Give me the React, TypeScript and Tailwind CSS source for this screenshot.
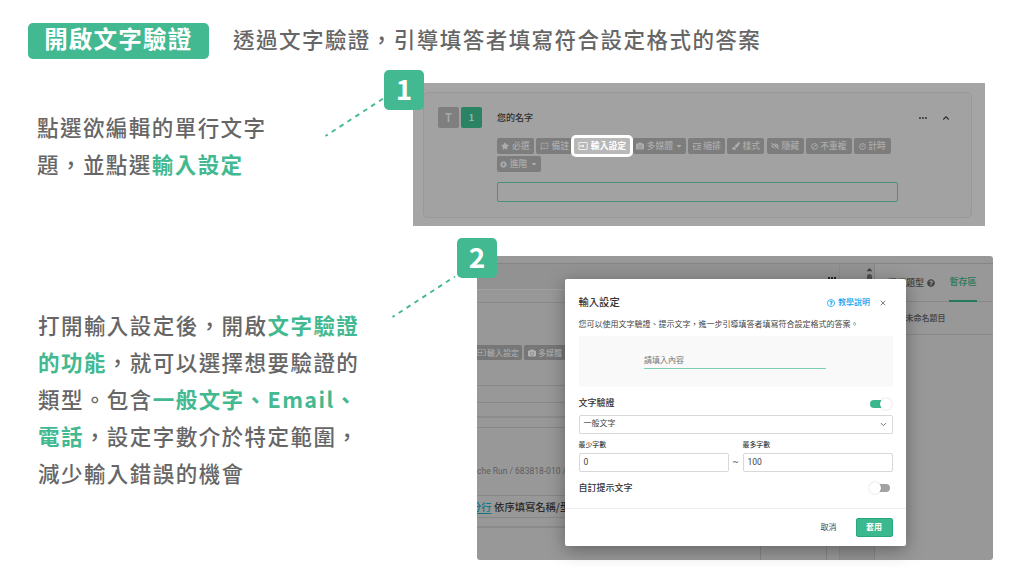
import React from 'react';
import { FaStar, FaCamera, FaCaretDown, FaCaretUp, FaPaintBrush, FaEyeSlash, FaQuestionCircle, FaRegQuestionCircle } from 'react-icons/fa';
import { MdInput, MdOutlineSms } from 'react-icons/md';
import { ChevronDown, ChevronUp, X } from 'lucide-react';

const Green = ({ children }: { children: React.ReactNode }) => (
  <span className="font-bold text-[#42b990]">{children}</span>
);

const StepBadge = ({ label }: { label: string }) => (
  <div className="flex h-10 w-10 items-center justify-center rounded-[5px] bg-[#42b990] pb-[5px] text-[28px] leading-none font-bold text-white">
    {label}
  </div>
);

const IndentIcon = () => (
  <svg className="h-[7px] w-[8px]" viewBox="0 0 8 7" fill="none" stroke="currentColor">
    <path d="M0 .6h8M0 6.2h8M4.2 2.5H8M4.2 4.3H8" strokeWidth="1" />
    <path d="M0 1.8 3 3.4 0 5z" fill="currentColor" stroke="none" />
  </svg>
);

const BanIcon = () => (
  <svg className="h-[7px] w-[7px]" viewBox="0 0 7 7" fill="none" stroke="currentColor">
    <circle cx="3.5" cy="3.5" r="2.9" strokeWidth="1" />
    <path d="M2 5 5 2" strokeWidth="1" />
  </svg>
);

const ClockIcon = () => (
  <svg className="h-[7px] w-[7px]" viewBox="0 0 7 7" fill="none" stroke="currentColor">
    <circle cx="3.5" cy="3.5" r="2.9" strokeWidth="1" />
    <path d="M3.8 1.6v2H2.2" strokeWidth=".8" />
  </svg>
);

const GearIcon = () => (
  <svg className="h-[7px] w-[7px]" viewBox="0 0 7 7" fill="none" stroke="currentColor">
    <circle cx="3.5" cy="3.5" r="2" strokeWidth="1.6" />
    <circle cx="3.5" cy="3.5" r="3" strokeWidth="1" strokeDasharray="1.2 1.156" />
  </svg>
);

const toolbar = [
  { label: '必選', icon: <FaStar />, width: 'w-[37px]' },
  { label: '備註', icon: <MdOutlineSms className="text-[9px]" />, width: 'w-[37px]' },
  { label: '輸入設定', icon: <MdInput className="text-[10px]" />, width: 'w-[56px]', active: true },
  { label: '多媒體', icon: <FaCamera />, width: 'w-[53px]', menu: true },
  { label: '縮排', icon: <IndentIcon />, width: 'w-[37px]' },
  { label: '樣式', icon: <FaPaintBrush />, width: 'w-[37px]' },
  { label: '隱藏', icon: <FaEyeSlash />, width: 'w-[37px]' },
  { label: '不重複', icon: <BanIcon />, width: 'w-[46px]' },
  { label: '計時', icon: <ClockIcon />, width: 'w-[37px]' },
  { label: '進階', icon: <GearIcon />, width: 'w-[44px]', menu: true },
];

const QuestionCard = () => (
  <div className="h-[143px] w-[572px] bg-[#a5a5a5] pt-[9px] pl-[10px]">
    <div className="h-[126px] w-[549px] rounded-[5px] border border-[#999999] bg-[#a2a2a2] pt-[14px] pl-[14px]">
      <div className="flex h-[21px] items-center">
        <div className="flex h-[21px] w-[21px] items-center justify-center rounded-[2px] bg-[#7f7f7f] pb-[1px] text-[11px] font-bold text-[#a8a8a8]">T</div>
        <div className="ml-[2px] flex h-[21px] w-[21px] items-center justify-center rounded-[2px] bg-[#2a8463] text-[9px] font-bold text-[#9cb5aa]">1</div>
        <span className="ml-[15px] text-[9px] font-medium text-[#2d2d2d]">您的名字</span>
        <div className="ml-auto flex items-center pr-[20px] text-[#333333]">
          <span className="flex gap-[1px]">
            <i className="h-[2px] w-[2px] rounded-full bg-[#333333]" />
            <i className="h-[2px] w-[2px] rounded-full bg-[#333333]" />
            <i className="h-[2px] w-[2px] rounded-full bg-[#333333]" />
          </span>
          <ChevronUp className="ml-[14px] h-[10px] w-[10px]" strokeWidth={2.6} />
        </div>
      </div>
      <div className="mt-[10px] ml-[59px] flex w-[400px] flex-wrap gap-x-[2.1px] gap-y-[2px]">
        {toolbar.map((item) => (
          <div
            key={item.label}
            className={`${item.width} flex h-4 shrink-0 items-center justify-center gap-[2.5px] rounded-[2px] text-[8.8px] leading-none whitespace-nowrap ${
              item.active
                ? 'z-10 -ml-[1px] mr-[1px] bg-[#b8b8b8] font-bold text-white outline-[3px] outline-white'
                : 'bg-[#7d7d7d] font-medium text-[#acacac]'
            }`}
          >
            <span className="text-[8px]">{item.icon}</span>
            <span>{item.label}</span>
            {item.menu && <FaCaretDown className="text-[8px]" />}
          </div>
        ))}
      </div>
      <div className="mt-[10px] ml-[59px] h-5 w-[401px] rounded-[2px] border border-[#4b9078]" />
    </div>
  </div>
);

const EditorBackdrop = () => (
  <div className="flex h-full flex-col">
    <div className="h-[8px] border-b border-[#858585]" />
    <div className="flex flex-1">
      <div className="flex w-[363px] flex-col border-r border-[#8c8c8c]">
        <div className="flex h-[26px] items-start justify-end gap-[1px] border-b border-[#a1a1a1] bg-[#929292] pt-[13px] pr-[3px]">
          <i className="h-[2px] w-[2px] bg-[#222222]" />
          <i className="h-[2px] w-[2px] bg-[#222222]" />
          <i className="h-[2px] w-[2px] bg-[#222222]" />
        </div>
        <div className="h-[13px] border-b border-[#8a8a8a]" />
        <div className="flex h-[83px] gap-[2px] border-b border-[#888888] pt-[42px] text-[8px] leading-none text-[#b3b3b3]">
          <div className="flex h-[15px] w-[45px] items-center gap-[1px] rounded-r-[2px] bg-[#777777] whitespace-nowrap">
            <MdInput className="shrink-0 text-[9px]" />
            輸入設定
          </div>
          <div className="flex h-[15px] w-[52px] items-center gap-[2px] rounded-[2px] bg-[#777777] pl-[4px]">
            <FaCamera className="text-[8px]" />
            多媒體
          </div>
        </div>
        <div className="h-[17px] border-b border-[#888888]" />
        <div className="h-[15px] border-b-2 border-[#8c8c8c]" />
        <div className="h-[10px] border-b border-[#888888]" />
        <div className="flex h-[68px] items-center border-b border-[#888888] pt-[19px]">
          <span className="font-['Roboto','Noto_Sans_CJK_TC',sans-serif] text-[8.5px] whitespace-nowrap text-[#5e5e5e]">che Run / 683818-010 / 選</span>
        </div>
        <div className="flex h-[22px] w-[300px] items-center overflow-hidden border-b border-[#888888] text-[10.3px] font-medium whitespace-nowrap text-[#2b2b2b]">
          <span className="-ml-[6px] mr-[2.5px] text-[#117787] underline underline-offset-2">分行</span>
          依序填寫名稱/型號
        </div>
        <div className="h-[10px] border-b-2 border-[#8b8b8b]" />
        <div className="ml-[283px] w-[67px] flex-1 border-x border-[#858585]" />
      </div>
      <div className="flex w-[35px] justify-end border-r border-[#868686] bg-[#929292]">
        <div className="flex w-[10px] flex-col items-center pt-[1px] text-[#444444]">
          <FaCaretUp className="text-[9px]" />
          <i className="h-[12px] w-[5px] rounded-full bg-[#505050]" />
        </div>
      </div>
      <div className="flex flex-1 flex-col text-[#444444]">
        <div className="flex h-[38px] items-center border-b border-[#888888] text-[9px] font-medium">
          <span className="ml-[13px] whitespace-nowrap">選擇題型</span>
          <FaQuestionCircle className="ml-[3px] text-[8px]" />
          <span className="ml-auto mr-[16.5px] flex h-[38px] items-center border-b-2 border-[#26795a] pt-[1px] text-[#26795a]">暫存區</span>
        </div>
        <div className="flex h-[33px] items-center border-b border-[#888888] pl-[30.5px] text-[8px] font-medium">未命名題目</div>
      </div>
    </div>
  </div>
);

const InputSettingsDialog = () => (
  <div className="flex h-[267px] w-[341px] flex-col rounded-[2px] bg-white font-['Roboto','Noto_Sans_CJK_TC',sans-serif] text-[#444444] shadow-[0_4px_18px_rgba(0,0,0,0.35)]">
    <div className="flex h-[230px] flex-col border-b border-[#eeeeee] px-[13.5px] pt-[15.5px]">
      <div className="flex h-4 items-center">
        <span className="text-[10.3px] font-medium text-[#333333]">輸入設定</span>
        <span className="ml-auto flex items-center gap-[3px] text-[8px] font-medium text-[#12a5f0]">
          <FaRegQuestionCircle />
          教學說明
        </span>
        <X className="ml-[9px] mr-[5.5px] h-2 w-2" strokeWidth={2} />
      </div>
      <div className="mt-[8px] h-3 text-[8px] leading-[12px] whitespace-nowrap">您可以使用文字驗證、提示文字，進一步引導填答者填寫符合設定格式的答案。</div>
      <div className="mt-[5.5px] h-[51px] bg-[#f9f9f9] pt-[15px] pl-[65.5px]">
        <div className="h-[18px] w-[182px] border-b border-[#7bd0b0] text-[8px] leading-[19px] text-[#777777]">請填入內容</div>
      </div>
      <div className="mt-[11px] flex h-3 items-center justify-between">
        <span className="text-[9px] font-medium text-[#333333]">文字驗證</span>
        <Toggle on />
      </div>
      <div className="mt-[4.5px] flex h-[19px] items-center justify-between rounded-[2px] border border-[#d8d8d8] px-[4px] text-[8px]">
        一般文字
        <ChevronDown className="h-[9px] w-[9px]" />
      </div>
      <div className="mt-[6.4px] flex items-end">
        <NumberField label="最少字數" value="0" />
        <span className="flex h-[19px] flex-1 items-center justify-center text-[9px]">~</span>
        <NumberField label="最多字數" value="100" />
      </div>
      <div className="mt-[10.5px] flex h-3 items-center justify-between">
        <span className="text-[9px] font-medium text-[#333333]">自訂提示文字</span>
        <Toggle />
      </div>
    </div>
    <div className="flex flex-1 items-center justify-end pr-[13.5px] text-[8px]">
      <span>取消</span>
      <div className="ml-[19px] flex h-[19px] w-[37px] items-center justify-center rounded-[2px] border border-[#27a97d] bg-[#3cb88e] font-bold text-white">套用</div>
    </div>
  </div>
);

const NumberField = ({ label, value }: { label: string; value: string }) => (
  <div className="w-[150px]">
    <div className="h-[13px] text-[6.9px] leading-[11px] font-medium">{label}</div>
    <div className="h-[19px] rounded-[2px] border border-[#d8d8d8] pl-[4px] text-[8.5px] leading-[17px]">{value}</div>
  </div>
);

const Toggle = ({ on = false }: { on?: boolean }) => (
  <div className={`flex items-center ${on ? 'mr-[1px]' : 'mr-[3px] flex-row-reverse'}`}>
    <div className={`h-2 w-[14px] rounded-full ${on ? 'bg-[#3cb88e]' : 'bg-[#a2a2a2]'}`} />
    <div className={`z-10 h-3 w-3 rounded-full bg-white shadow-[0_0_1.5px_rgba(0,0,0,0.25)] ${on ? '-ml-1' : '-mr-[5px]'}`} />
  </div>
);

const Connector = () => (
  <svg className="h-[50px] w-[70px]" viewBox="0 0 70 50" fill="none">
    <path d="M4.5 46 L67 5.5" stroke="#42b990" strokeWidth="1.9" strokeDasharray="4.6 4.8" strokeDashoffset="2" />
  </svg>
);

const App = () => {
  return (
    <main className="flex h-[577px] w-[1024px] flex-col overflow-hidden bg-white font-['Noto_Sans_CJK_TC',sans-serif] text-[#666666]">
      <header className="flex h-[83px] items-start pt-[22.5px] pl-[27.5px]">
        <h1 className="flex h-[36px] w-[181.5px] items-center justify-center rounded-[5px] bg-[#42b990] pb-[3px] text-[23.5px] leading-none font-bold tracking-[1.2px] whitespace-nowrap text-white">
          開啟文字驗證
        </h1>
        <p className="ml-[24px] text-[21.5px] leading-[31px] font-medium tracking-[1.47px] whitespace-nowrap">
          透過文字驗證，引導填答者填寫符合設定格式的答案
        </p>
      </header>

      <section className="flex h-[173px]">
        <p className="w-[413px] pt-[25px] pl-[37px] text-[21.5px] leading-[37px] font-medium tracking-[1.45px]">
          點選欲編輯的單行文字
          <br />
          題，並點選<Green>輸入設定</Green>
        </p>
        <div className="relative h-[143px]">
          <QuestionCard />
          <div className="absolute -top-[13px] -left-[29px]">
            <StepBadge label="1" />
          </div>
          <div className="absolute top-[7px] -left-[92px] w-[64px] overflow-hidden">
            <Connector />
          </div>
        </div>
      </section>

      <section className="flex h-[304px]">
        <p className="w-[477px] pt-[50px] pl-[38px] text-[21.5px] leading-[37px] font-medium tracking-[1.45px] whitespace-nowrap">
          打開輸入設定後，開啟<Green>文字驗證</Green>
          <br />
          <Green>的功能</Green>，就可以選擇想要驗證的
          <br />
          類型。包含<Green>一般文字、Email、</Green>
          <br />
          <Green>電話</Green>，設定字數介於特定範圍，
          <br />
          減少輸入錯誤的機會
        </p>
        <div className="relative h-[304px] w-[516px]">
          <div className="h-full overflow-hidden rounded-[3px] bg-[#989898]">
            <EditorBackdrop />
          </div>
          <div className="absolute top-[23px] left-[88px]">
            <InputSettingsDialog />
          </div>
          <div className="absolute -top-[18px] -left-[20px]">
            <StepBadge label="2" />
          </div>
          <div className="absolute top-[15px] -left-[89px] w-[69px] overflow-hidden">
            <Connector />
          </div>
        </div>
      </section>
    </main>
  );
};

export default App;
